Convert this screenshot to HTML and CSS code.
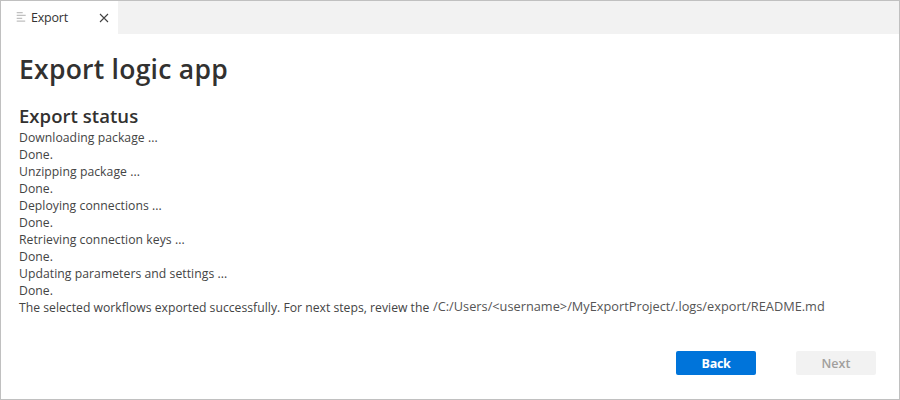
FILE: index.html
```html
<!DOCTYPE html>
<html lang="en">
<head>
<meta charset="utf-8">
<title>Export logic app</title>
<link rel="stylesheet" href="styles.css">
</head>
<body>
<div class="window">
  <header class="tabs">
    <div class="tab">
      <svg class="tab-icon" width="10" height="10" viewBox="0 0 10 10" fill="none" stroke="#c0c0c0" stroke-width="1.3"><path d="M.7 .6h6M.7 3.4h9M.7 6.4h5.5M.7 9.2h8.5"/></svg>
      <span class="tab-title">Export</span>
      <svg class="tab-close" width="10" height="10" viewBox="0 0 10 10" fill="none" stroke="#424242" stroke-width="1.1"><path d="M1 1l8 8M9 1L1 9"/></svg>
    </div>
  </header>
  <main class="content">
    <h1>Export logic app</h1>
    <h2>Export status</h2>
    <div class="log">
      <div>Downloading package ...</div>
      <div>Done.</div>
      <div>Unzipping package ...</div>
      <div>Done.</div>
      <div>Deploying connections ...</div>
      <div>Done.</div>
      <div>Retrieving connection keys ...</div>
      <div>Done.</div>
      <div>Updating parameters and settings ...</div>
      <div>Done.</div>
      <div class="result"><span class="message">The selected workflows exported successfully. For next steps, review the</span><span class="path">/C:/Users/&lt;username&gt;/MyExportProject/.logs/export/README.md</span></div>
    </div>
  </main>
  <footer class="actions">
    <button class="button primary">Back</button>
    <button class="button" disabled>Next</button>
  </footer>
</div>
</body>
</html>
```

FILE: styles.css
```css
* { box-sizing: border-box; }
body {
  margin: 0;
  font-family: "Segoe UI", "Open Sans", "Noto Sans", sans-serif;
  color: #323130;
}
.window {
  width: 900px;
  height: 400px;
  border: 1px solid #c0c0c0;
  background: #fff;
  display: flex;
  flex-direction: column;
}
.tabs { height: 33px; background: #f2f2f2; display: flex; }
.tab {
  width: 117px;
  background: #fff;
  display: flex;
  align-items: center;
  padding: 0 9px 0 15px;
  font-size: 12.5px;
  color: #333;
}
.tab-icon { margin-top: -2px; }
.tab-title { margin-left: 5px; letter-spacing: -0.2px; }
.tab-close { margin-left: auto; }
.content { padding: 17px 18px 0; flex: 1; }
h1 {
  margin: 0;
  font-size: 26.5px;
  line-height: 36px;
  font-weight: 550;
  letter-spacing: 0.25px;
}
h2 {
  margin: 16px 0 0;
  font-size: 18.5px;
  line-height: 25px;
  font-weight: 550;
  letter-spacing: 0.05px;
}
.log {
  margin-top: 1px;
  font-size: 12.2px;
  line-height: 17px;
  letter-spacing: 0.05px;
  color: #444;
  white-space: nowrap;
}
.result { display: flex; }
.message { width: 410px; letter-spacing: 0.01px; }
.path {
  margin-left: 4px;
  font-size: 12.75px;
  letter-spacing: 0.01px;
  position: relative;
  top: -1px;
  color: #555;
}
.actions { display: flex; justify-content: flex-end; gap: 40px; padding: 0 23px 24px; }
.button {
  width: 80px;
  height: 24px;
  padding: 2px 0 0;
  border: 0;
  border-radius: 2px;
  background: #f2f2f2;
  color: #a19f9d;
  font: 600 12.5px/22px "Segoe UI", "Open Sans", "Noto Sans", sans-serif;
}
.primary { background: #0074da; color: #fff; font-weight: 700; letter-spacing: -0.3px; }
```
